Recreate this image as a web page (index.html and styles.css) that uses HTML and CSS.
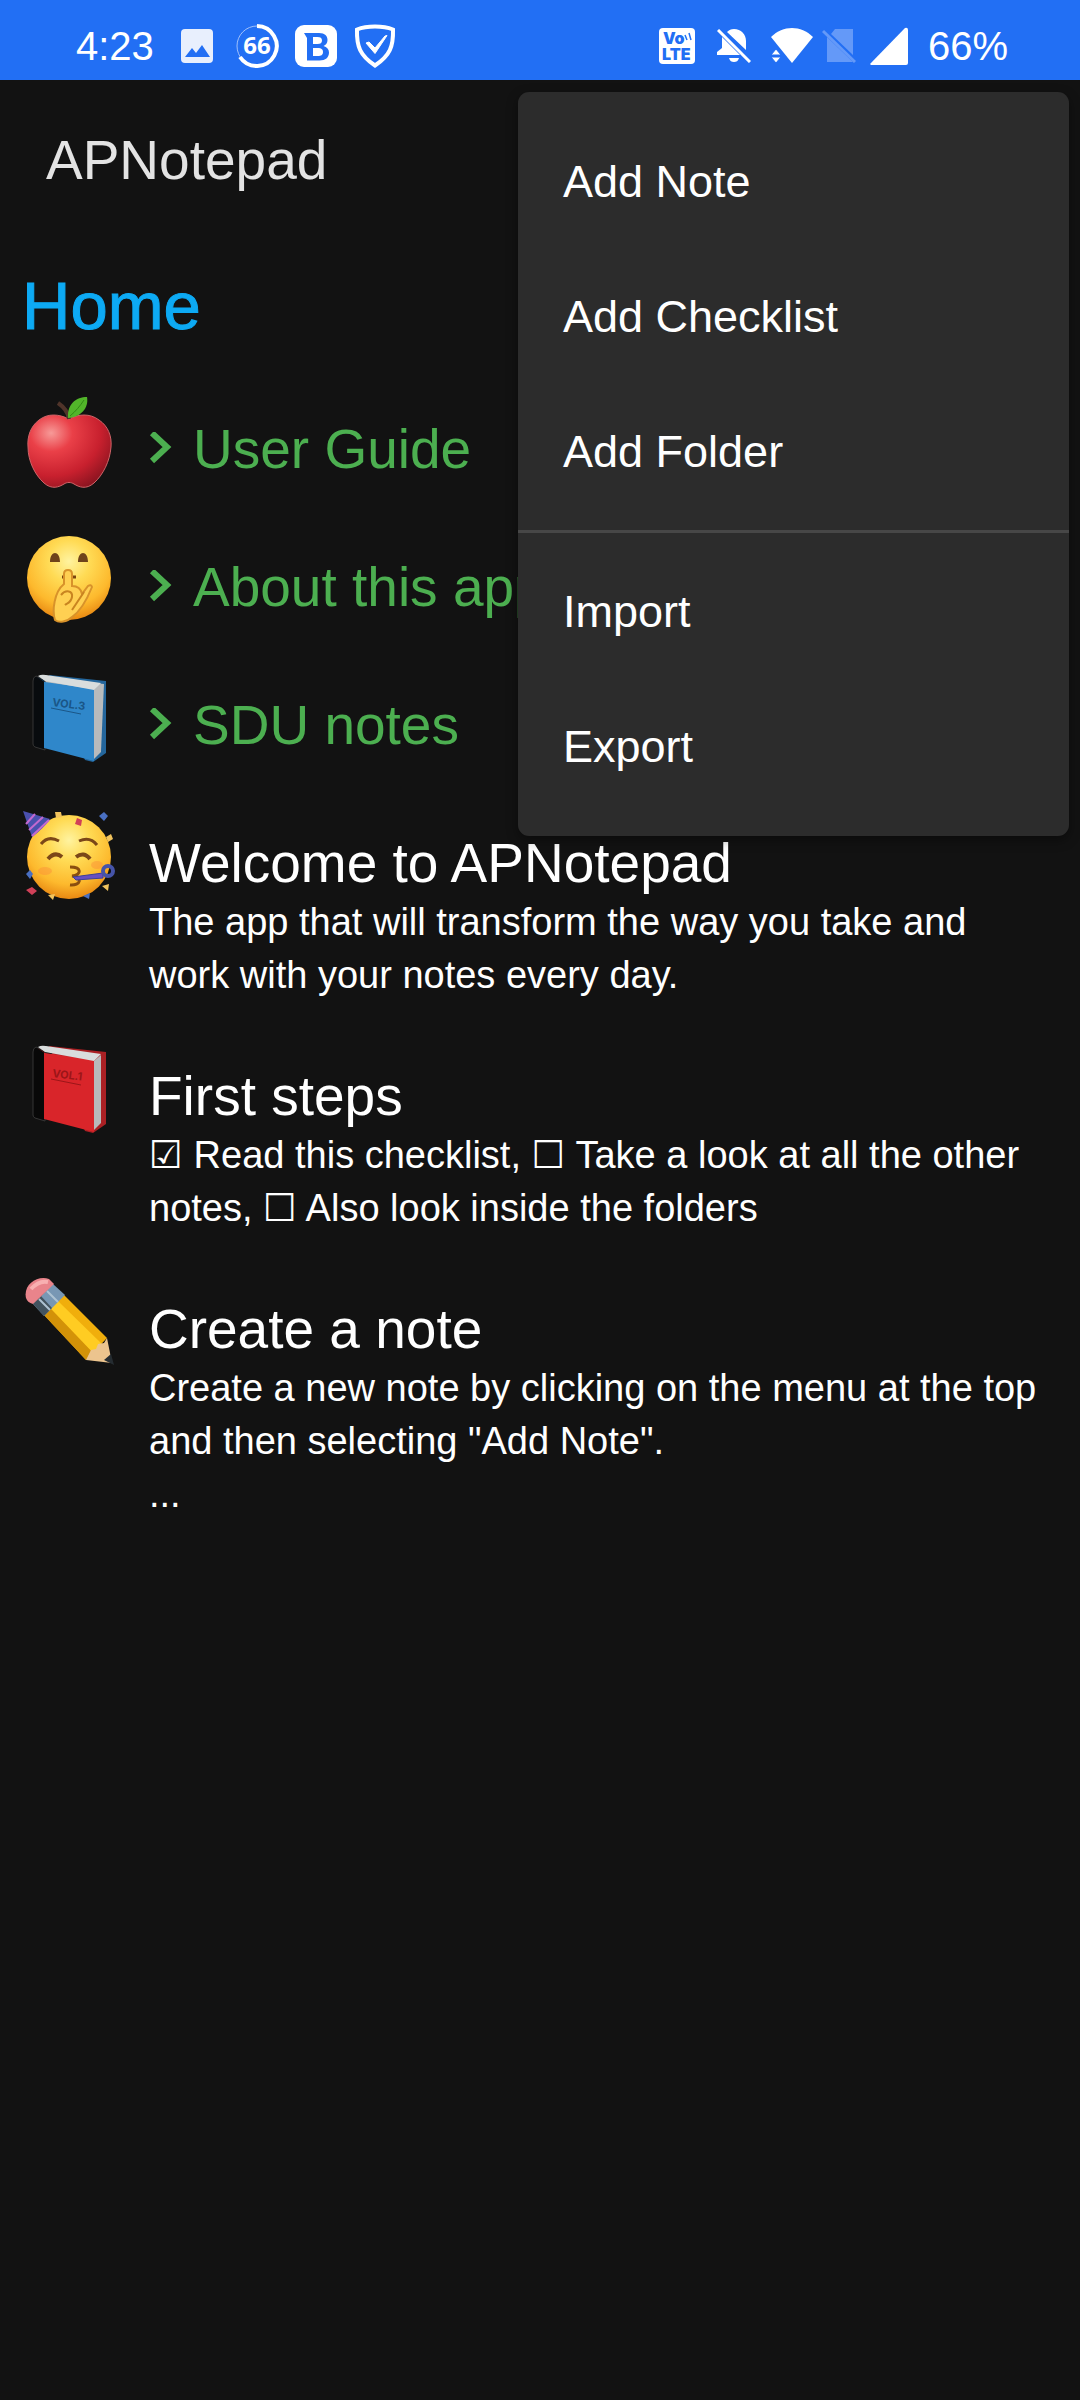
FILE: index.html
```html
<!DOCTYPE html>
<html lang="en">
<head>
<meta charset="utf-8">
<meta name="viewport" content="width=device-width, initial-scale=1">
<title>APNotepad</title>
<link rel="stylesheet" href="styles.css">
</head>
<body>
<header class="status">
  <div class="status-side">
    <span class="status-text">4:23</span>
    <svg class="ic-image" viewBox="0 0 32 34" width="32" height="34" aria-hidden="true">
      <rect width="32" height="34" rx="4" fill="#e8effd"/>
      <path d="M4 28 11 19l4 5 6-8 8 12z" fill="#226ff4"/>
    </svg>
    <svg class="ic-ring" viewBox="0 0 44 44" width="44" height="44" aria-hidden="true">
      <circle cx="22" cy="22" r="20" fill="none" stroke="#9fc0fb" stroke-width="1"/>
      <path d="M22 2a20 20 0 1 1-17 31" fill="none" stroke="#fff" stroke-width="4"/>
      <text x="22" y="30" text-anchor="middle" class="glyph-66">66</text>
    </svg>
    <svg class="ic-b" viewBox="0 0 42 42" width="42" height="42" aria-hidden="true">
      <rect width="42" height="42" rx="9" fill="#fff"/>
      <path fill-rule="evenodd" fill="#226ff4" d="M9 8h15c6 0 8.500 3 8.500 7 0 3-1.500 5-4 6 3.500 1 5.500 3.500 5.500 6.500 0 5-3.500 8-9.500 8H12V13zM18 12v7h4.500c3 0 4.500-1 4.500-3.500S25.500 12 22.500 12zM18 23v8h5c3 0 5-1 5-4s-2-4-5-4z"/>
    </svg>
    <svg class="ic-shield" viewBox="0 0 42 44" width="42" height="44" aria-hidden="true">
      <path d="M21 2.500c7 0 13 1 18 3 .5 17-3 26-18 36C6 31.500 2.500 22.500 3 5.500c5-2 11-3 18-3z" fill="none" stroke="#fff" stroke-width="4"/>
      <path d="M12 19l3-1 6 6 10-12 2-.5-12 18z" fill="#fff" stroke="#fff" stroke-width="1"/>
    </svg>
  </div>
  <div class="status-side">
    <svg viewBox="0 0 36 36" width="36" height="36" aria-hidden="true">
      <rect width="36" height="36" rx="4" fill="#fff"/>
      <text x="4" y="16" class="glyph-volte">Vo</text>
      <text x="3" y="32" class="glyph-volte">LTE</text>
      <path d="M26 7l2 5M30 5l2 7" stroke="#226ff4" stroke-width="1.500" fill="none"/>
    </svg>
    <svg class="ic-bell" viewBox="0 0 34 34" width="34" height="34" aria-hidden="true">
      <path d="M10 3C12 1 14 0 17 0c7 0 12 5 12 12v9zM5 8l18 18H0v-3l5-4zM12 29h10c-1 3-2.500 4-5 4s-4-1-5-4z" fill="#fff"/>
      <path d="M1 1l32 32" stroke="#fff" stroke-width="3"/>
    </svg>
    <svg class="ic-wifi" viewBox="0 0 42 36" width="42" height="36" aria-hidden="true">
      <path d="M0 9C12-3 30-3 42 9L21 35z" fill="#fff"/>
      <path d="M0 27l5-6 5 6zM0 29h10l-5 6z" fill="#fff" stroke="#226ff4" stroke-width="1"/>
    </svg>
    <svg class="ic-nosim" viewBox="0 0 34 36" width="34" height="36" aria-hidden="true">
      <path d="M13 1h18v26L9 6zM5 9l26 25H5z" fill="#6499f8"/>
      <path d="M1 3l32 31" stroke="#6499f8" stroke-width="3"/>
    </svg>
    <svg class="ic-signal" viewBox="0 0 38 38" width="38" height="38" aria-hidden="true">
      <path d="M0 37 35 1q3-1 3 2v33q0 2-2 2H1z" fill="#fff"/>
    </svg>
    <span class="status-text">66%</span>
  </div>
</header>

<div class="app">
  <div class="appbar"><h1 class="app-title">APNotepad</h1></div>

  <nav class="menu" aria-label="Actions">
    <button class="menu-item" type="button">Add Note</button>
    <button class="menu-item" type="button">Add Checklist</button>
    <button class="menu-item" type="button">Add Folder</button>
    <hr class="menu-line">
    <button class="menu-item" type="button">Import</button>
    <button class="menu-item" type="button">Export</button>
  </nav>

  <main class="main">
    <h2 class="home">Home</h2>
    <ul class="list">
      <li class="row">
        <svg class="emoji" viewBox="0 0 94 92" aria-hidden="true">
          <defs>
            <radialGradient id="apple" cx=".28" cy=".25" r=".85"><stop offset="0" stop-color="#f79a98"/><stop offset=".3" stop-color="#ea4048"/><stop offset=".7" stop-color="#c8202e"/><stop offset="1" stop-color="#8c1420"/></radialGradient>
          </defs>
          <path d="M47 23c9-5 21-6 30 1 9 6 13 16 12 27-1 14-8 28-17 36-8 7-15 4-20 1-3-2-7-2-10 0-5 3-12 6-20-1C13 79 6 65 6 51 5 40 9 30 17 24c9-7 20-6 30-1z" fill="url(#apple)" stroke="#cf6468" stroke-width="1"/>
          <path d="M47 23c-1-7-5-12-11-16" stroke="#50342a" stroke-width="4" fill="none"/>
          <path d="M46 22C45 8 54 1 65 1c2 11-6 20-19 21z" fill="#52b52a"/>
          <path d="M48 20C54 15 58 10 62 4" stroke="#318a15" fill="none"/>
        </svg>
        <div class="row-text"><a class="folder" href="#guide"><svg class="chev" viewBox="0 0 24 34" aria-hidden="true"><path d="M3 1l15 14L3 29"/></svg>User Guide</a></div>
      </li>
      <li class="row">
        <svg class="emoji" viewBox="0 0 94 92" aria-hidden="true">
          <defs>
            <radialGradient id="face" cx=".5" cy=".3" r=".7"><stop offset="0" stop-color="#fff3a0"/><stop offset=".35" stop-color="#ffdb55"/><stop offset=".75" stop-color="#fdb92d"/><stop offset="1" stop-color="#e88812"/></radialGradient>
          </defs>
          <circle cx="47" cy="44" r="42" fill="url(#face)"/>
          <path d="M28 28c0-12 10-12 10 0zM56 28c0-12 10-12 10 0z" fill="#6e431b"/>
          <path d="M40 43h14" stroke="#7a4510" stroke-width="3"/>
          <path d="M42 40q0-4 4-4t4 4v12c6 0 9 3 10 8l6-8q3-2 4 1c-4 10-10 23-20 30-5 5-13 6-17 3-3-9-1-28 9-36z" fill="#ffd052" stroke="#d8922a" stroke-width="2"/>
          <path d="M39 61c5-6 12-4 11 2s-5 6-7 8M50 76l12-18" stroke="#c98420" stroke-width="2" fill="none"/>
        </svg>
        <div class="row-text"><a class="folder" href="#about"><svg class="chev" viewBox="0 0 24 34" aria-hidden="true"><path d="M3 1l15 14L3 29"/></svg>About this app</a></div>
      </li>
      <li class="row">
        <svg class="emoji" viewBox="0 0 94 92" aria-hidden="true">
          <path d="M27 3l57 6v72l-13 9-8-2z" fill="#24669c"/>
          <path d="M17 6l65 6-3 67-10 5z" fill="#b9bcbd"/>
          <path d="M14 4l9 4v70l-10-3q-2-1-2-3V9q0-4 3-5z" fill="#080b0e" stroke="#353535"/>
          <path d="M15 5l8 5 49 7v72l-50-13V9z" fill="#2f87ca"/>
          <path d="M16 4q3-2 8-1l55 8-7 7-49-9z" fill="#d9dddd"/>
          <path d="M72 18l7-6v68l-7 7z" fill="#b8babc"/>
          <text x="30" y="34" transform="rotate(7 30 34)" class="vol vol-blue">VOL.3</text>
          <path d="M29 36l30 6" stroke="#1a5687"/>
        </svg>
        <div class="row-text"><a class="folder" href="#sdu"><svg class="chev" viewBox="0 0 24 34" aria-hidden="true"><path d="M3 1l15 14L3 29"/></svg>SDU notes</a></div>
      </li>
      <li class="row">
        <svg class="emoji" viewBox="0 0 94 92" aria-hidden="true">
          <circle cx="47" cy="47" r="42" fill="url(#face)"/>
          <path d="M1 1l27 8q-6 9-18 18z" fill="#4a50ae"/>
          <path d="M4 14 13 4M7 20 21 7M10 26 27 10" stroke="#c369cf" stroke-width="2"/>
          <path d="M19 34q7-9 18-3M57 31q11-5 18 4" stroke="#7b4718" stroke-width="3" fill="none"/>
          <path d="M26 49q7-8 14-2M54 47q8-6 14 2" stroke="#7b4718" stroke-width="4" fill="none"/>
          <path d="M48 57c12 0 12 8 2 9 11 1 9 10-2 9" stroke="#8a4e0f" stroke-width="3" fill="none"/>
          <path d="M51 67l30-4v5l-27 2z" fill="#684fc0" stroke="#3d4097"/>
          <circle cx="86" cy="61" r="5" fill="none" stroke="#4654a8" stroke-width="4"/>
          <path d="M55 8l5 2-1 6-6-2zM4 80l6-3 5 4-5 4z" fill="#d04058"/>
          <path d="M77 6l5-4 4 4-4 5zM4 64l4-4 3 4-3 5zM61 86l7-3-1 6z" fill="#496fc2"/>
          <path d="M33 2h6l1 5-6 1zM84 27l5-3 2 5-5 3zM26 85l7-1-2 6zM80 76l7-2-1 7z" fill="#f1c35d"/>
          <ellipse cx="23" cy="61" rx="7" ry="4" fill="#f98739" opacity=".4"/><ellipse cx="75" cy="55" rx="6" ry="4" fill="#f98739" opacity=".4"/>
        </svg>
        <div class="row-text"><h3 class="note-title">Welcome to APNotepad</h3><p class="note-body">The app that will transform the way you take and work with your notes every day.</p></div>
      </li>
      <li class="row">
        <svg class="emoji" viewBox="0 0 94 92" aria-hidden="true">
          <path d="M27 3l57 6v72l-13 9-8-2z" fill="#aa2024"/>
          <path d="M14 4l9 4v70l-10-3q-2-1-2-3V9q0-4 3-5z" fill="#080808" stroke="#353535"/>
          <path d="M15 5l8 5 49 7v72l-50-13V9z" fill="#d9252a"/>
          <path d="M16 4q3-2 8-1l55 8-7 7-49-9z" fill="#d9dddd"/>
          <path d="M72 18l7-6v68l-7 7z" fill="#b8babc"/>
          <text x="30" y="34" transform="rotate(7 30 34)" class="vol vol-red">VOL.1</text>
          <path d="M29 36l30 6" stroke="#9c1518"/>
        </svg>
        <div class="row-text"><h3 class="note-title">First steps</h3><p class="note-body">☑ Read this checklist, ☐ Take a look at all the other notes, ☐ Also look inside the folders</p></div>
      </li>
      <li class="row">
        <svg class="emoji" viewBox="0 0 94 92" aria-hidden="true">
          <path d="M22 39 42 19l43 43-21 22z" fill="#f0ae0c"/>
          <path d="M29 33 36 25l45 44-9 9z" fill="#ffcc22"/>
          <path d="M22 39l7-6 43 45-8 6z" fill="#d39208"/>
          <path d="M85 62l5 25-26-3 5-10 5-1 2-5 6-1z" fill="#ecc48e"/>
          <path d="M82 84l7-6 3 11z" fill="#252c31"/>
          <path d="M11 28 31 8l12 11-21 21z" fill="#7897b4"/>
          <path d="M11 28l8-8 11 12-8 8z" fill="#42535f"/>
          <path d="M17 23l11 11M25 15l11 11" stroke="#adc2d2" stroke-width="2"/>
          <path d="M4 22C1 9 15-1 27 3l5 5-21 20c-4-1-6-3-7-6z" fill="#e9848b"/>
          <path d="M9 13Q17 4 26 6" stroke="#f8b0b1" stroke-width="4" fill="none"/>
        </svg>
        <div class="row-text"><h3 class="note-title">Create a note</h3><p class="note-body">Create a new note by clicking on the menu at the top and then selecting "Add Note".<br>...</p></div>
      </li>
    </ul>
  </main>
</div>
</body>
</html>
```
FILE: styles.css
```css
* { box-sizing: border-box; }
body {
  margin: 0;
  min-height: 100vh;
  background: #121212;
  color: #fff;
  font-family: "Liberation Sans", "DejaVu Sans", sans-serif;
}
h1, h2, h3, p, ul { margin: 0; padding: 0; font-weight: 400; }
svg { display: block; flex: none; }

.status {
  display: flex;
  justify-content: space-between;
  height: 80px;
  padding: 12px 72px 0 76px;
  background: #226ff4;
}
.status-side { display: flex; align-items: center; }
.status-text { font-size: 40px; line-height: 48px; }
.ic-image { margin-left: 27px; }
.ic-ring { margin-left: 22px; }
.ic-b { margin-left: 16px; }
.ic-shield { margin-left: 17px; }
.ic-bell { margin-left: 22px; }
.ic-wifi { margin-left: 20px; }
.ic-nosim { margin-left: 9px; }
.ic-signal { margin: 0 20px 0 14px; }
.glyph-66 { font: 700 24px "Open Sans", sans-serif; fill: #fff; }
.glyph-volte { font: 900 16px Inter, sans-serif; fill: #226ff4; }

.app { position: relative; }
.appbar { padding: 40px 46px; }
.app-title { font-size: 55px; line-height: 80px; color: #e3e3e3; }

.main { padding: 24px 36px 0 22px; }
.home {
  font-size: 67px;
  line-height: 84px;
  color: #0daaf4;
  -webkit-text-stroke: 1px #0daaf4;
}
.list { list-style: none; padding-top: 48px; }
.row { display: flex; gap: 33px; padding-bottom: 41px; }
.emoji { width: 94px; height: 97px; padding-bottom: 5px; }
.row-text { flex: 1; min-width: 0; padding-top: 20px; }
.folder {
  display: flex;
  align-items: center;
  gap: 20px;
  font-size: 55px;
  line-height: 66px;
  color: #4caf50;
  text-decoration: none;
}
.chev { width: 24px; height: 34px; fill: none; stroke: #4caf50; stroke-width: 6; }
.note-title { font-size: 55px; line-height: 66px; }
.note-body { font-size: 38px; line-height: 53px; }
.vol { font: 700 11px Inter, sans-serif; }
.vol-blue { fill: #1a5687; }
.vol-red { fill: #9c1518; }

.menu {
  position: absolute;
  top: 12px;
  right: 11px;
  z-index: 1;
  width: 551px;
  padding: 22px 0;
  border-radius: 11px;
  background: #2c2c2c;
  box-shadow: 0 4px 12px rgba(0, 0, 0, .4);
}
.menu-item {
  display: block;
  width: 100%;
  padding: 0 45px;
  border: 0;
  background: none;
  color: #fff;
  font: inherit;
  font-size: 45px;
  line-height: 135px;
  text-align: left;
}
.menu-line { height: 3px; margin: 11px 0; border: 0; background: #474747; }
```
